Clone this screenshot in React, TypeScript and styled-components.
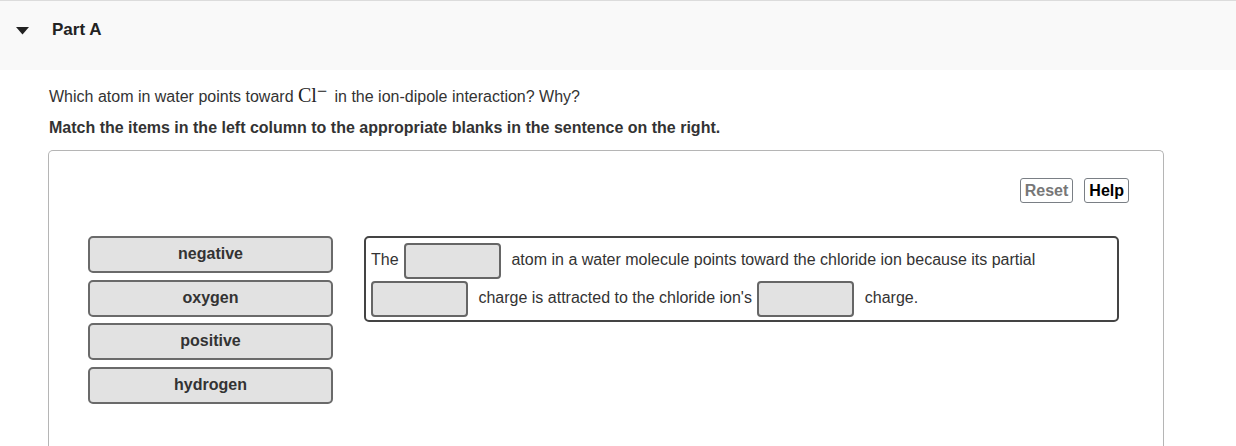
import styled, { createGlobalStyle } from "styled-components";

const GlobalStyle = createGlobalStyle`
  html, body {
    margin: 0;
    padding: 0;
    background: #fff;
    font-family: "Liberation Sans", Arial, sans-serif;
    color: #333;
  }
`;

const Header = styled.div`
  border-top: 1px solid #dcdcdc;
  background: #f9f9f9;
  height: 69px;
  display: flex;
  align-items: center;
  padding-left: 16px;
`;

const Caret = styled.svg`
  width: 13px;
  height: 8px;
  margin-right: 23px;
  margin-top: -10px;
`;

const PartTitle = styled.h2`
  margin: 0 0 12px;
  font-size: 17px;
  font-weight: bold;
  color: #222;
`;

const Body = styled.div`
  padding: 14px 0 0 49px;
`;

const Question = styled.p`
  margin: 0;
  font-size: 16px;
  line-height: 22px;
  color: #333;
`;

const Chem = styled.span`
  font-family: "Liberation Serif", "Times New Roman", serif;
  font-size: 20px;
  color: #222;
  margin-right: 3px;
  sup {
    font-size: 18px;
    vertical-align: 5px;
    line-height: 0;
  }
`;

const Instruction = styled.p`
  margin: 10px 0 0;
  font-size: 16px;
  font-weight: bold;
  line-height: 20px;
  color: #333;
`;

const Panel = styled.div`
  margin: 12px 0 0 -1px;
  width: 1116px;
  height: 300px;
  border: 1px solid #b5b5b5;
  border-bottom: none;
  border-radius: 5px 5px 0 0;
  box-sizing: border-box;
  padding: 27px 34px 0 39px;
`;

const Toolbar = styled.div`
  display: flex;
  justify-content: flex-end;
  gap: 11px;
`;

const ToolButton = styled.button<{ $muted?: boolean }>`
  font-family: "Liberation Sans", Arial, sans-serif;
  font-size: 16px;
  font-weight: bold;
  height: 25px;
  padding: 0 4px;
  background: #fff;
  border: 1px solid #7a7f85;
  border-radius: 3px;
  color: ${(p) => (p.$muted ? "#777" : "#000")};
`;

const Workspace = styled.div`
  display: flex;
  align-items: flex-start;
  gap: 31px;
  margin-top: 33px;
`;

const Choices = styled.div`
  display: flex;
  flex-direction: column;
  gap: 6.7px;
  width: 245px;
`;

const Choice = styled.div`
  height: 37px;
  box-sizing: border-box;
  border: 2px solid #6a6a6a;
  border-radius: 5px;
  background: #e2e2e2;
  display: flex;
  justify-content: center;
  align-items: center;
  padding-bottom: 1px;
  font-size: 16px;
  font-weight: bold;
  color: #333;
`;

const Sentence = styled.div`
  width: 755px;
  box-sizing: border-box;
  border: 2px solid #444;
  border-radius: 5px;
  padding: 3px 8px 3px 5px;
  font-size: 16px;
  line-height: 37px;
  color: #333;
`;

const Blank = styled.span`
  display: inline-block;
  width: 97px;
  height: 36px;
  box-sizing: border-box;
  border: 2px solid #666;
  border-radius: 4px;
  background: #e2e2e2;
  vertical-align: middle;
  margin: 0 6px 0 1px;

  &:nth-of-type(2) {
    margin-left: 0;
  }
`;

export default function App() {
  return (
    <>
      <GlobalStyle />
      <Header>
        <Caret viewBox="0 0 13 8">
          <polygon points="0,0 13,0 6.5,7.5" fill="#222" />
        </Caret>
        <PartTitle>Part A</PartTitle>
      </Header>
      <Body>
        <Question>
          Which atom in water points toward{" "}
          <Chem>
            Cl<sup>−</sup>
          </Chem>{" "}
          in the ion-dipole interaction? Why?
        </Question>
        <Instruction>
          Match the items in the left column to the appropriate blanks in the
          sentence on the right.
        </Instruction>
        <Panel>
          <Toolbar>
            <ToolButton $muted>Reset</ToolButton>
            <ToolButton>Help</ToolButton>
          </Toolbar>
          <Workspace>
            <Choices>
              {["negative", "oxygen", "positive", "hydrogen"].map((c) => (
                <Choice key={c}>{c}</Choice>
              ))}
            </Choices>
            <Sentence>
              The <Blank /> atom in a water molecule points toward the chloride
              ion because its partial <Blank /> charge is attracted to the
              chloride ion's <Blank /> charge.
            </Sentence>
          </Workspace>
        </Panel>
      </Body>
    </>
  );
}
